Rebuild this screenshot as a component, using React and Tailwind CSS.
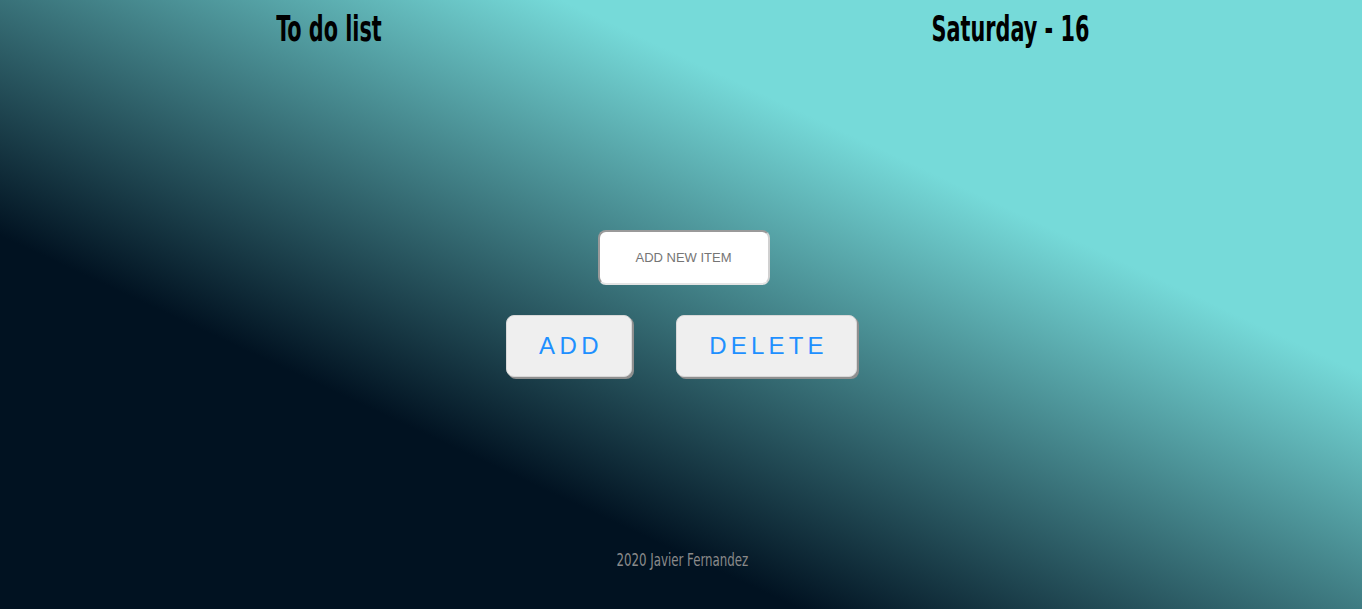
import React from 'react';

const narrow = { fontFamily: '"DejaVu Sans Condensed", "DejaVu Sans", sans-serif' };

const App = () => {
  return (
    <div className="w-full h-[609px] overflow-hidden bg-[linear-gradient(25deg,#011221_30%,#76dad9_70%)] flex flex-col">
      {/* header */}
      <div className="grid grid-cols-2 pt-[12px]" style={narrow}>
        <div className="text-center pr-[24px]">
          <h1 className="inline-block text-[35px] leading-none font-bold text-black scale-x-[0.66]">To do list</h1>
        </div>
        <div className="text-center pr-[22px]">
          <h1 className="inline-block text-[35px] leading-none font-bold text-black scale-x-[0.66]">Saturday - 16</h1>
        </div>
      </div>

      {/* form */}
      <div className="flex flex-col items-center mt-[182px]" style={{ fontFamily: '"Liberation Sans", Arial, sans-serif' }}>
        <input
          type="text"
          placeholder="ADD NEW ITEM"
          className="w-[172px] h-[55px] ml-[5px] bg-white rounded-[8px] border-2 border-[#9a9a9a] border-b-[#e4e4e4] border-r-[#d0d0d0] text-center text-[13px] text-[#555] placeholder:text-[#757575] outline-none"
        />
        <div className="flex gap-[44px] mt-[30px] ml-[1px]">
          <button className="w-[126px] h-[62px] pl-[4px] bg-[#efefef] rounded-[8px] border border-[#d8d8d8] shadow-[2px_2px_0_#8f8f8f] text-[24px] tracking-[4.5px] text-[#1e90ff]">
            ADD
          </button>
          <button className="w-[181px] h-[62px] pl-[4px] bg-[#efefef] rounded-[8px] border border-[#d8d8d8] shadow-[2px_2px_0_#8f8f8f] text-[24px] tracking-[4.2px] text-[#1e90ff]">
            DELETE
          </button>
        </div>
      </div>

      {/* footer */}
      <div className="mt-[172px] text-center pl-[2px]" style={narrow}>
        <p className="inline-block text-[18px] leading-none text-[#8a8a8a] scale-x-[0.73]">2020 Javier Fernandez</p>
      </div>
    </div>
  );
};

export default App;
